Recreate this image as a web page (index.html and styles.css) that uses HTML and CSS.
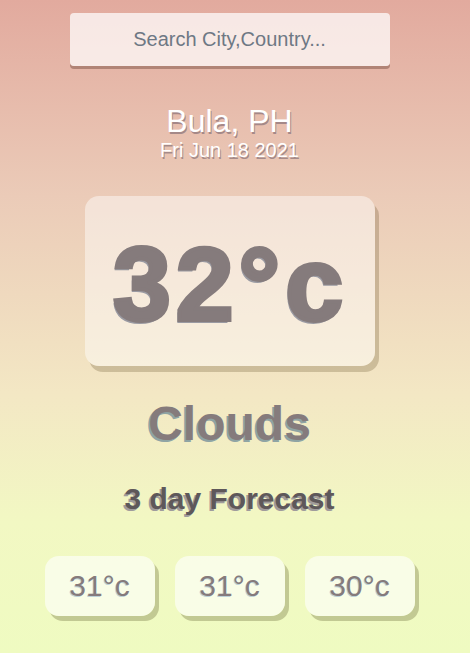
FILE: index.html
```html
<!DOCTYPE html>
<html>
<head>
<meta charset="utf-8">
<link rel="stylesheet" href="styles.css">
</head>
<body>
<main class="app">
  <div class="search-box">
    <input class="search-bar" type="text" placeholder="Search City,Country...">
  </div>
  <div class="location-box">
    <div class="location">Bula, PH</div>
    <div class="date">Fri Jun 18 2021</div>
  </div>
  <div class="weather-box">
    <div class="temp">32°c</div>
    <div class="weather">Clouds</div>
  </div>
  <h2 class="forecast-title">3 day Forecast</h2>
  <div class="forecast">
    <div class="day">31°c</div>
    <div class="day">31°c</div>
    <div class="day">30°c</div>
  </div>
</main>
</body>
</html>
```
FILE: styles.css
```css
* { box-sizing: border-box; }
html, body { margin: 0; padding: 0; }
body {
  font-family: "Liberation Sans", Arial, sans-serif;
  width: 470px;
  height: 653px;
  overflow: hidden;
  background: linear-gradient(to bottom, #e2aa9e 0%, #ebcbb8 30%, #f3e7c4 60%, #f2f8c3 80%, #effbc1 100%);
}
.app {
  display: flex;
  flex-direction: column;
  align-items: center;
  padding-top: 13px;
  padding-right: 11px;
}
.search-box { width: 320px; }
.search-bar {
  display: block;
  width: 100%;
  height: 53px;
  border: none;
  outline: none;
  border-radius: 4px;
  background: rgba(255, 255, 255, 0.72);
  box-shadow: 0 3px rgba(80, 40, 30, 0.35);
  font-family: "Liberation Sans", Arial, sans-serif;
  font-size: 20px;
  text-align: center;
  color: #313131;
}
.search-bar::placeholder { color: #6e7884; }
.location-box {
  margin-top: 37px;
  text-align: center;
  color: #fff;
}
.location {
  font-size: 32px;
  line-height: 36px;
  text-shadow: 1px 2px rgba(120, 100, 110, 0.6);
}
.date {
  font-size: 20px;
  line-height: 22px;
  text-shadow: 1px 2px rgba(120, 100, 110, 0.6);
}
.weather-box {
  display: flex;
  flex-direction: column;
  align-items: center;
}
.temp {
  margin-top: 35px;
  width: 290px;
  height: 170px;
  border-radius: 14px;
  background: rgba(255, 255, 255, 0.45);
  box-shadow: 4px 6px rgba(90, 70, 30, 0.25);
  display: flex;
  align-items: center;
  justify-content: center;
  font-size: 104px;
  font-weight: 900;
  color: #857b7c;
  -webkit-text-stroke: 4px #857b7c;
  letter-spacing: 5px;
  text-shadow: -2px 3px #9a9aa2;
  padding-top: 6px;
  padding-left: 2px;
}
.weather {
  margin-top: 30px;
  font-size: 48px;
  font-weight: 700;
  line-height: 56px;
  color: #857b7c;
  text-shadow: -2px 2px #8fa4a4;
}
.forecast-title {
  margin: 29px 0 0;
  font-size: 30px;
  line-height: 36px;
  font-weight: 700;
  color: #5e585a;
  text-shadow: -2px 2px #a09c9c;
}
.forecast {
  margin-top: 39px;
  display: flex;
  gap: 20px;
}
.day {
  width: 110px;
  height: 60px;
  border-radius: 14px;
  background: rgba(255, 255, 255, 0.6);
  box-shadow: 4px 5px rgba(110, 110, 60, 0.35);
  display: flex;
  align-items: center;
  justify-content: center;
  font-size: 30px;
  font-weight: 400;
  color: #857b7c;
  text-shadow: -1px 1px rgba(90, 140, 190, 0.4);
}
```
